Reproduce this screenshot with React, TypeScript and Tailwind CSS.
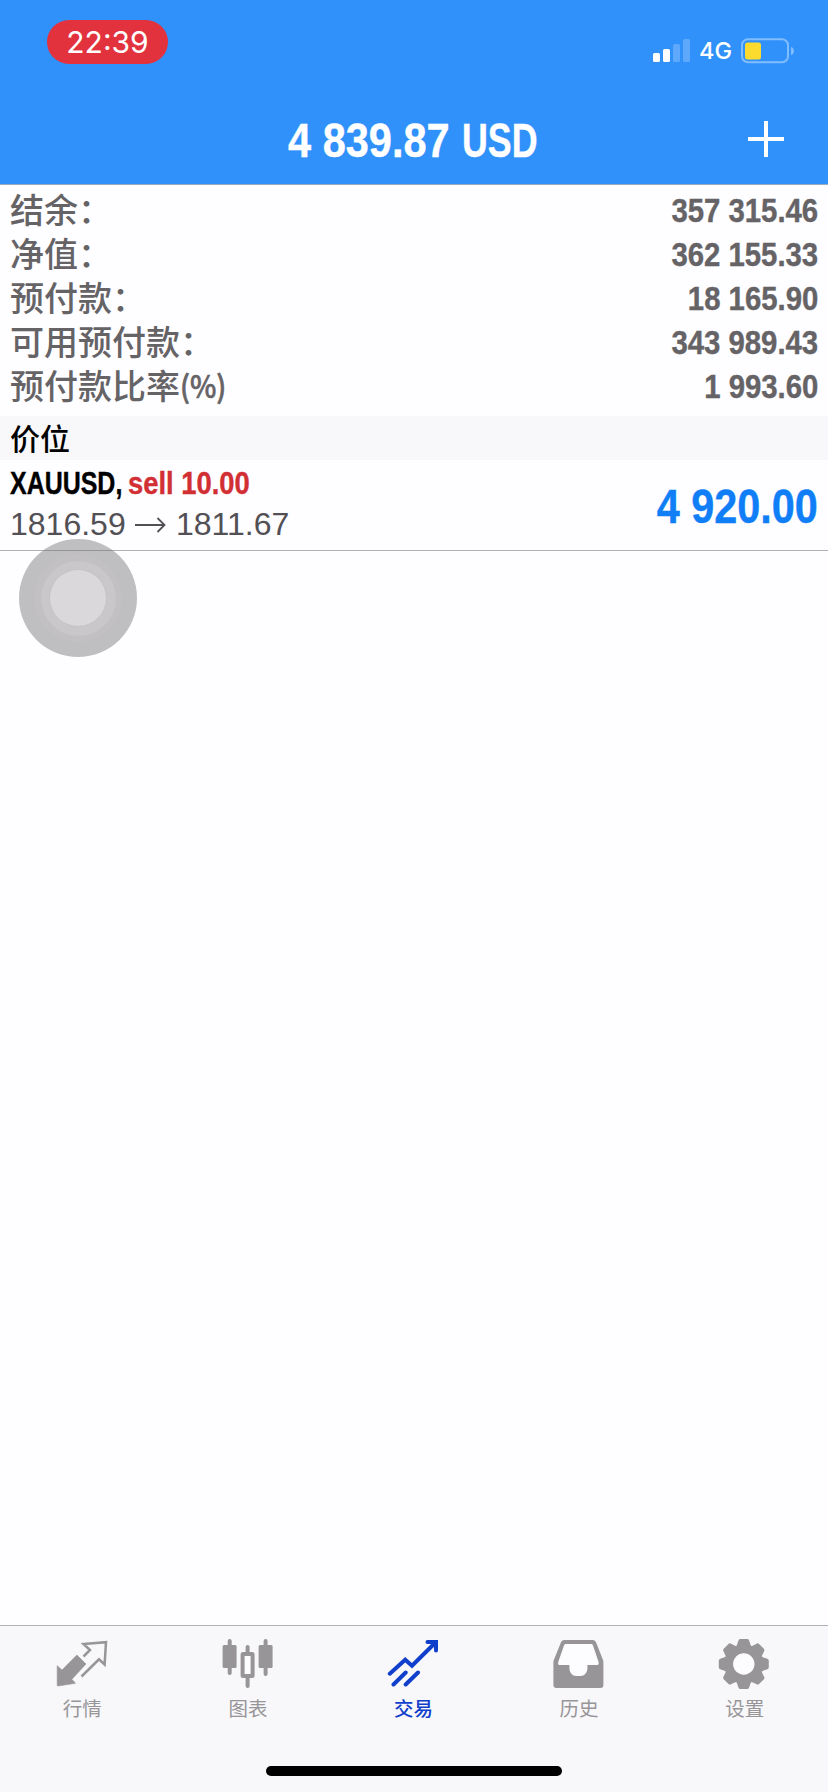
import type { ReactNode } from "react";

const CJK = "font-['Liberation_Sans','Noto_Sans_CJK_SC',sans-serif]";
const HEAVY = "font-bold [-webkit-text-stroke:0.4px_currentColor]";

const balances = [
  { label: "结余：", value: "357 315.46" },
  { label: "净值：", value: "362 155.33" },
  { label: "预付款：", value: "18 165.90" },
  { label: "可用预付款：", value: "343 989.43" },
  { label: "预付款比率", unit: "(%)", value: "1 993.60" },
];

function StatusBar() {
  return (
    <div className="flex h-[84px] items-start justify-between pt-5 pr-[33px] pl-[47px]">
      <div className="flex h-11 w-[121px] items-center justify-center rounded-[22px] bg-[#e2323e] font-['Inter',sans-serif] text-[30px] leading-none text-white">
        22:39
      </div>
      <div className="flex items-center pt-[17px]">
        <svg className="mr-[8px] h-[26px] w-[38px]" viewBox="0 0 38 26" fill="#fff">
          <rect x="0" y="15" width="7" height="9" rx="1.5" />
          <rect x="10" y="11" width="7" height="13" rx="1.5" />
          <rect x="20" y="6" width="7" height="18" rx="1.5" opacity=".22" />
          <rect x="30" y="1" width="7" height="23" rx="1.5" opacity=".22" />
        </svg>
        <span className="mr-[10px] w-8 pt-px font-['Inter',sans-serif] text-[23.5px] leading-[26px] font-medium whitespace-nowrap text-white">4G</span>
        <svg className="h-[26px] w-[54px]" viewBox="0 0 54 26">
          <rect x="1" y="1.300" width="46" height="23" rx="6" fill="none" stroke="#80bdfd" strokeWidth="2" />
          <rect x="4" y="4.500" width="16" height="17" rx="2.5" fill="#fcdb2e" />
          <path d="M50 9c4 1 4 7 0 8z" fill="#80bdfd" />
        </svg>
      </div>
    </div>
  );
}

function Header() {
  return (
    <header className="h-[185px] border-b border-[#9aabc4] bg-[#3191fb]">
      <StatusBar />
      <div className="grid h-[100px] grid-cols-[1fr_260px_1fr] items-center pt-[13px] pr-[44px] pl-[44px]">
        <span />
        <h1 className={`flex pl-[4px] font-['Liberation_Sans',sans-serif] text-[48px] leading-[56px] whitespace-nowrap text-white ${HEAVY}`}>
          <span className="w-[174px]">
            <span className="block origin-left scale-x-[.865]">4 839.87</span>
          </span>
          <span className="block origin-left scale-x-[.745]">USD</span>
        </h1>
        <svg className="mb-[3px] h-9 w-9 justify-self-end" viewBox="0 0 36 36" fill="#fff">
          <path d="M16 0h4v16h16v4H20v16h-4V20H0v-4h16z" />
        </svg>
      </div>
    </header>
  );
}

function Summary() {
  return (
    <section className="pt-[3px] pr-[10px] pb-2 pl-[10px] text-[#656366]">
      {balances.map((row) => (
        <div key={row.label} className="flex h-11 items-center justify-between">
          <span className={`${CJK} flex pt-[2px] text-[34px] leading-[44px] font-medium whitespace-nowrap`}>
            {row.label}
            {row.unit && (
              <span className="block origin-left scale-x-[.92] font-['Noto_Sans_CJK_SC',sans-serif] text-[30.5px] leading-[41px] [-webkit-text-stroke:0.6px_currentColor]">
                {row.unit}
              </span>
            )}
          </span>
          <span className={`origin-right scale-x-[.862] font-['Liberation_Sans',sans-serif] text-[34px] leading-[44px] whitespace-nowrap ${HEAVY}`}>
            {row.value}
          </span>
        </div>
      ))}
    </section>
  );
}

function Position() {
  return (
    <div className="flex h-[91px] items-center justify-between border-b border-[#b2b0b4] bg-[#fefdff] px-[10px] font-['Liberation_Sans',sans-serif]">
      <div className="mb-[2px] flex flex-col">
        <div className={`flex text-[32px] leading-[41px] whitespace-nowrap ${HEAVY}`}>
          <span className="w-[118px]">
            <span className="block origin-left scale-x-[.78] text-black">XAUUSD,</span>
          </span>
          <span className="block origin-left scale-x-[.855] text-[#d22f34]">sell 10.00</span>
        </div>
        <div className="flex items-center text-[32px] leading-[41px] text-[#525055]">
          <span className="w-[125px]">1816.59</span>
          <svg className="mr-[10px] h-4 w-[31px]" viewBox="0 0 31 16" fill="none" stroke="currentColor" strokeWidth="1.8">
            <path d="M0 8h29M22.500 1l7 7-7 7" />
          </svg>
          <span>1811.67</span>
        </div>
      </div>
      <span className={`mt-[3px] origin-right scale-x-[.862] text-[48px] leading-none whitespace-nowrap text-[#107ff7] ${HEAVY}`}>4 920.00</span>
    </div>
  );
}

function AssistiveButton() {
  return (
    <div className="absolute top-[539px] left-[19px] flex h-[118px] w-[118px] items-center justify-center rounded-full bg-[#747175]/45">
      <div className="flex h-[88px] w-[88px] items-center justify-center rounded-full bg-[#c2c0c2]">
        <div className="flex h-[75px] w-[75px] items-center justify-center rounded-full bg-[#c9c7c9]">
          <div className="h-[58px] w-[58px] rounded-full border border-[#c5c3c5] bg-[#dad8da]" />
        </div>
      </div>
    </div>
  );
}

const toothAngles = [0, 45, 90, 135, 180, 225, 270, 315];

const tabs: { label: string; active?: boolean; icon: ReactNode }[] = [
  {
    label: "行情",
    icon: (
      <>
        <path d="M1.200 29.700 6 34 20.900 19 30 28 15.900 43.300 19.500 47.300 2 50Q1.200 50 1.200 49z" fill="currentColor" stroke="currentColor" strokeWidth=".6" strokeLinejoin="round" />
        <path d="M27.500 20.500 34 14 27.500 8 50 6.200 48.600 28.500 43 23.300 25.500 40.500" fill="none" stroke="currentColor" strokeWidth="2.5" />
      </>
    ),
  },
  {
    label: "图表",
    icon: (
      <g fill="currentColor">
        <rect x="6.700" y="3" width="4" height="36" rx="2" />
        <rect x="1.600" y="9" width="14" height="23" rx="1.500" />
        <rect x="24.600" y="9" width="4" height="9" rx="2" />
        <rect x="24.600" y="40" width="4" height="12" rx="2" />
        <rect x="21.600" y="18" width="10" height="22" rx=".5" fill="#fdfcff" stroke="currentColor" strokeWidth="4" />
        <rect x="42.600" y="3" width="4" height="37" rx="2" />
        <rect x="37.600" y="9" width="14" height="23" rx="1.500" />
      </g>
    ),
  },
  {
    label: "交易",
    active: true,
    icon: (
      <g fill="none" stroke="currentColor" strokeWidth="4" strokeLinecap="round">
        <path d="M2.800 37.700 18.200 23.700 25 29.700 48.500 6.500M6.500 48.500 18.700 36.500M18.700 48.500 31 36.500" strokeLinejoin="miter" />
        <path d="M40.500 6h8.500v8.500" strokeLinejoin="miter" />
      </g>
    ),
  },
  {
    label: "历史",
    icon: (
      <>
        <path d="M11.500 4h28c2 0 3 1 3.600 2.600L50 24c.3.900.4 1.500.4 2.500V49a3 3 0 0 1-3 3h-44a3 3 0 0 1-3-3V26.500c0-1 .1-1.600.4-2.500L7.900 6.600C8.500 5 9.500 4 11.500 4z" fill="currentColor" />
        <path d="M13 8h25c1 0 1.700.5 2 1.500l5.400 16c.6 2 .3 3.500-1 3.500h-10v3c0 4.500-3 8-7 8h-4c-4 0-7-3.500-7-8v-3h-10c-1.300 0-1.600-1.500-1-3.500L11 9.500C11.300 8.500 12 8 13 8z" fill="#fdfcff" />
      </>
    ),
  },
  {
    label: "设置",
    icon: (
      <g transform="translate(25.800 28)" fill="currentColor">
        <circle r="14.700" fill="none" stroke="currentColor" strokeWidth="9" />
        {toothAngles.map((angle) => (
          <path key={angle} transform={`rotate(${angle})`} d="M-8.500-17C-6.500-18.500-6.300-21-5.300-23.500-4.900-24.700-4-25-3-25H3C4-25 4.900-24.700 5.300-23.500 6.300-21 6.500-18.500 8.500-17z" />
        ))}
        <circle r="10.700" fill="#fdfcff" />
      </g>
    ),
  },
];

function TabBar() {
  return (
    <nav className="flex h-[167px] flex-col border-t border-[#b2b0b4] bg-[#f8f7fa]">
      <div className="grid grid-cols-5 pt-[10px]">
        {tabs.map((tab) => (
          <div key={tab.label} className={`flex flex-col items-center ${tab.active ? "text-[#103fcb]" : "text-[#979598]"}`}>
            <svg className="h-14 w-[54px]" viewBox="0 0 54 56">
              {tab.icon}
            </svg>
            <span className={`${CJK} mt-[3px] mr-px text-[19.5px] leading-[28px] ${tab.active ? "font-medium" : "font-normal"}`}>{tab.label}</span>
          </div>
        ))}
      </div>
      <div className="mt-auto mb-4 h-[10px] w-[296px] self-center rounded-full bg-black" />
    </nav>
  );
}

export default function App() {
  return (
    <div className="relative flex h-[1792px] w-[828px] flex-col overflow-hidden bg-[#fefdff]">
      <Header />
      <Summary />
      <div className={`${CJK} flex h-11 items-center bg-[#f8f7fa] px-[10px] pt-[3px] text-[30px] leading-[41px] font-medium text-black`}>价位</div>
      <Position />
      <div className="flex-1" />
      <TabBar />
      <AssistiveButton />
    </div>
  );
}
